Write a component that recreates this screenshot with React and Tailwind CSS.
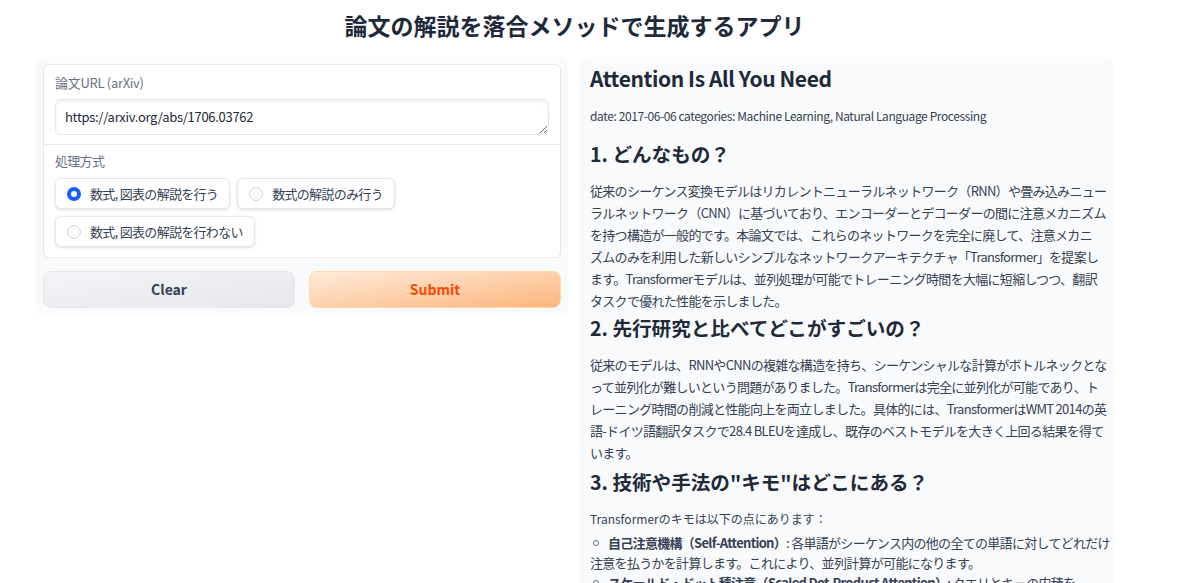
import { useState } from 'react';

const font = { fontFamily: '"Noto Sans CJK JP", "Noto Sans", sans-serif' };

const options = ['数式, 図表の解説を行う', '数式の解説のみ行う', '数式, 図表の解説を行わない'];

const para1 = [
  '従来のシーケンス変換モデルはリカレントニューラルネットワーク（RNN）や畳み込みニュー',
  'ラルネットワーク（CNN）に基づいており、エンコーダーとデコーダーの間に注意メカニズム',
  'を持つ構造が一般的です。本論文では、これらのネットワークを完全に廃して、注意メカニ',
  'ズムのみを利用した新しいシンプルなネットワークアーキテクチャ「Transformer」を提案し',
  'ます。Transformerモデルは、並列処理が可能でトレーニング時間を大幅に短縮しつつ、翻訳',
  'タスクで優れた性能を示しました。',
];

const para2 = [
  '従来のモデルは、RNNやCNNの複雑な構造を持ち、シーケンシャルな計算がボトルネックとな',
  'って並列化が難しいという問題がありました。Transformerは完全に並列化が可能であり、ト',
  'レーニング時間の削減と性能向上を両立しました。具体的には、TransformerはWMT 2014の英',
  '語-ドイツ語翻訳タスクで28.4 BLEUを達成し、既存のベストモデルを大きく上回る結果を得て',
  'います。',
];

function Lines({ lines }) {
  return lines.map((l, i) => (
    <span key={i}>
      {l}
      {i < lines.length - 1 && <br />}
    </span>
  ));
}

function Radio({ label, checked, onClick }) {
  return (
    <button
      onClick={onClick}
      className="flex h-[31px] items-center gap-[9px] rounded-md border border-gray-200 bg-white px-[11px] text-[13px] tracking-[-0.7px] text-gray-700 shadow-sm"
    >
      {checked ? (
        <span className="flex h-[14px] w-[14px] items-center justify-center rounded-full bg-blue-600">
          <span className="h-[6px] w-[6px] rounded-full bg-white" />
        </span>
      ) : (
        <span className="h-[14px] w-[14px] rounded-full border border-gray-300 bg-gray-50" />
      )}
      {label}
    </button>
  );
}

function Bullet() {
  return <span className="mr-[9px] ml-[3px] inline-block h-[6px] w-[6px] -translate-y-[2px] rounded-full border border-gray-500" />;
}

export default function App() {
  const [mode, setMode] = useState(0);

  return (
    <main className="h-[583px] overflow-hidden bg-white" style={font}>
      <div className="w-[1113px] pl-[36px]">
        <h1 className="pt-[9px] text-center text-[23px] leading-[32px] font-bold text-gray-800">
          論文の解説を落合メソッドで生成するアプリ
        </h1>

        <div className="mt-[16px] flex items-start gap-[12px]">
          {/* input column */}
          <section className="w-[532px] rounded-lg bg-gray-50 p-[7px]">
            <div className="rounded-md border border-gray-200 bg-white">
              <div className="px-[11px] pt-[9px] pb-[9px]">
                <label className="block text-[13px] leading-[18px] tracking-[-0.3px] text-gray-500">論文URL (arXiv)</label>
                <textarea
                  defaultValue="https://arxiv.org/abs/1706.03762"
                  rows={1}
                  className="mt-[7px] block h-[36px] w-full resize-y rounded-md border border-gray-200 px-[9px] py-[7px] text-[13px] leading-[20px] tracking-[-0.3px] text-gray-800 shadow-inner outline-none"
                />
              </div>
              <div className="border-t border-gray-200 px-[11px] pt-[7px] pb-[10px]">
                <p className="text-[13px] leading-[18px] tracking-[-0.7px] text-gray-500">処理方式</p>
                <div className="mt-[8px] flex flex-wrap gap-[7px]">
                  {options.map((o, i) => (
                    <Radio key={o} label={o} checked={mode === i} onClick={() => setMode(i)} />
                  ))}
                </div>
              </div>
            </div>

            <div className="mt-[13px] flex gap-[14px]">
              <button className="h-[37px] flex-1 rounded-lg border border-gray-200 bg-gradient-to-br from-gray-100 to-gray-200 text-[14px] font-semibold text-gray-700">
                Clear
              </button>
              <button className="h-[37px] flex-1 rounded-lg border border-orange-200 bg-gradient-to-br from-[#feebdb] to-[#fcb57a] text-[14px] font-semibold text-orange-600">
                Submit
              </button>
            </div>
          </section>

          {/* output column */}
          <article className="h-[600px] w-[533px] rounded-lg bg-gray-50 pt-[5px] pr-[8px] pl-[10px] text-[13px] leading-[22px] tracking-[-0.7px] text-gray-700">
            <h2 className="text-[21px] leading-[32px] font-bold tracking-[-0.4px] text-gray-800">Attention Is All You Need</h2>
            <p className="mt-[11px] text-[12px] tracking-[-0.4px]">date: 2017-06-06 categories: Machine Learning, Natural Language Processing</p>

            <h3 className="mt-[12px] text-[19.6px] leading-[30px] font-bold tracking-normal text-gray-800">1. どんなもの？</h3>
            <p className="mt-[11px] whitespace-nowrap">
              <Lines lines={para1} />
            </p>

            <h3 className="mt-[1px] text-[19.6px] leading-[30px] font-bold tracking-normal text-gray-800">2. 先行研究と比べてどこがすごいの？</h3>
            <p className="mt-[11px] whitespace-nowrap">
              <Lines lines={para2} />
            </p>

            <h3 className="mt-[3px] text-[19.6px] leading-[30px] font-bold tracking-normal text-gray-800">3. 技術や手法の"キモ"はどこにある？</h3>
            <p className="mt-[11px] text-[12px] tracking-normal">Transformerのキモは以下の点にあります：</p>
            <ul className="mt-[3px] leading-[20px] whitespace-nowrap">
              <li>
                <Bullet />
                <span className="font-bold">自己注意機構（Self-Attention）</span>: 各単語がシーケンス内の他の全ての単語に対してどれだけ
                <br />
                注意を払うかを計算します。これにより、並列計算が可能になります。
              </li>
              <li>
                <Bullet />
                <span className="font-bold">スケールド・ドット積注意（Scaled Dot-Product Attention）</span>: クエリとキーの内積を
                <br />
                スケーリングして計算します。
              </li>
            </ul>
          </article>
        </div>
      </div>
    </main>
  );
}
